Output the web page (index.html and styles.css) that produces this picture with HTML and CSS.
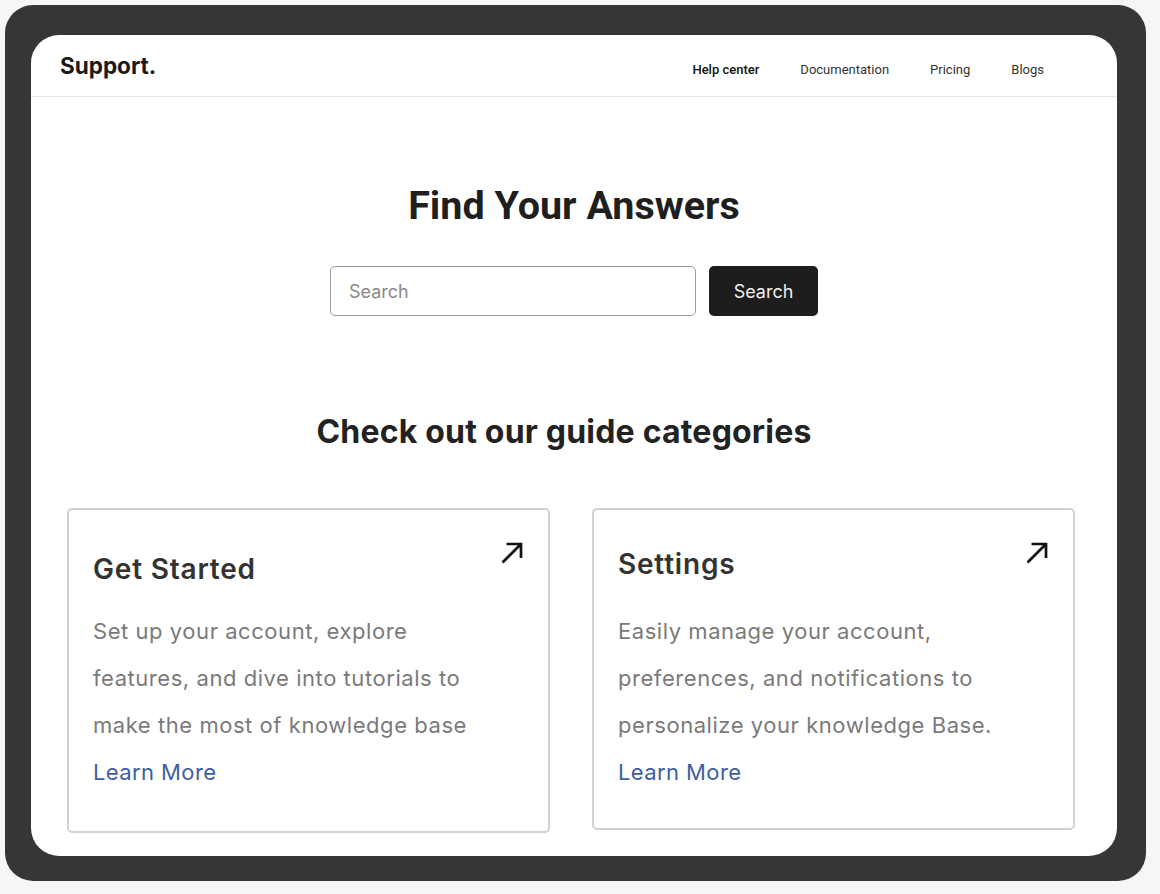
FILE: index.html
```html
<!DOCTYPE html>
<html lang="en">
<head>
<meta charset="utf-8">
<title>Support</title>
<link rel="stylesheet" href="styles.css">
</head>
<body>
<div class="frame">
  <div class="screen">
    <header class="topbar">
      <div class="logo">Support.</div>
      <nav class="nav">
        <a class="nav-link active" href="#">Help center</a>
        <a class="nav-link" href="#">Documentation</a>
        <a class="nav-link" href="#">Pricing</a>
        <a class="nav-link" href="#">Blogs</a>
      </nav>
    </header>
    <main class="content">
      <h1 class="hero-title">Find Your Answers</h1>
      <form class="search">
        <input class="search-input" type="text" placeholder="Search">
        <button class="search-btn" type="button">Search</button>
      </form>
      <h2 class="section-title">Check out our guide categories</h2>
      <div class="cards">
        <article class="card card-first">
          <div class="card-head">
            <h3 class="card-title">Get Started</h3>
            <svg class="arrow" viewBox="0 0 22 22" width="22" height="22" aria-hidden="true"><path d="M1.5 20.5 L20 2 M5.5 2 H20 V16" fill="none" stroke="#111" stroke-width="2.7"/></svg>
          </div>
          <p class="card-text">Set up your account, explore features, and dive into tutorials to make the most of knowledge base</p>
          <a class="card-link" href="#">Learn More</a>
        </article>
        <article class="card card-second">
          <div class="card-head">
            <h3 class="card-title">Settings</h3>
            <svg class="arrow" viewBox="0 0 22 22" width="22" height="22" aria-hidden="true"><path d="M1.5 20.5 L20 2 M5.5 2 H20 V16" fill="none" stroke="#111" stroke-width="2.7"/></svg>
          </div>
          <p class="card-text">Easily manage your account, preferences, and notifications to personalize your knowledge Base.</p>
          <a class="card-link" href="#">Learn More</a>
        </article>
      </div>
    </main>
  </div>
</div>
</body>
</html>
```
FILE: styles.css
```css
* { box-sizing: border-box; }
html, body { margin: 0; }
body {
  background: #f6f6f6;
  padding: 5px 14px 12px 5px;
  font-family: "Inter", "Liberation Sans", sans-serif;
}
.frame {
  background: #363638;
  border-radius: 28px;
  padding: 30px 29px 25px 26px;
}
.screen {
  background: #ffffff;
  border-radius: 28px;
  height: 821px;
  overflow: hidden;
}
.topbar {
  height: 62px;
  border-bottom: 1px solid #e6e6e6;
  display: flex;
  align-items: center;
  justify-content: space-between;
  padding: 0 73px 0 29px;
}
.logo {
  font-family: "Inter", sans-serif;
  font-weight: 700;
  font-size: 22.5px;
  color: #1a1a1a;
  margin-top: 0;
}
.nav {
  display: flex;
  gap: 41px;
  margin-top: 8px;
}
.nav-link {
  font-family: "Roboto", sans-serif;
  font-size: 13px;
  color: #333;
  text-decoration: none;
}
.nav-link.active {
  font-weight: 500;
  color: #111;
}
.content {
  display: flex;
  flex-direction: column;
  align-items: center;
}
.hero-title {
  margin: 85px 0 0;
  font-family: "Roboto", sans-serif;
  font-weight: 700;
  font-size: 39.5px;
  line-height: 48px;
  color: #1f1f1f;
}
.search {
  margin: 36px 0 0;
  display: flex;
  gap: 13px;
}
.search-input {
  width: 366px;
  height: 50px;
  border: 1px solid #9c9c9c;
  border-radius: 5px;
  padding: 0 18px;
  font-family: "Inter", sans-serif;
  font-size: 18px;
  color: #333;
  outline: none;
}
.search-input::placeholder { color: #8a8a8a; }
.search-btn {
  width: 109px;
  height: 50px;
  border: none;
  border-radius: 5px;
  background: #1d1d1d;
  color: #f0f0f0;
  font-family: "Inter", sans-serif;
  font-size: 18px;
}
.section-title {
  margin: 96px 20px 0 0;
  font-family: "Inter", sans-serif;
  font-weight: 700;
  font-size: 32px;
  line-height: 40px;
  letter-spacing: 0.2px;
  color: #222;
}
.cards {
  margin: 56px 0 0 -6px;
  display: flex;
  gap: 42px;
  align-items: flex-start;
}
.card {
  width: 483px;
  border: 2px solid #d2d2d2;
  border-radius: 5px;
  padding: 32px 25px 35px 24px;
}
.card-second { padding-bottom: 32px; }
.card-head {
  display: flex;
  justify-content: space-between;
  align-items: flex-start;
}
.card-title {
  margin: 10px 0 0;
  font-family: "Inter", sans-serif;
  font-weight: 600;
  font-size: 28px;
  line-height: 34px;
  letter-spacing: 0.8px;
  color: #333;
}
.card-second .card-title { margin-top: 5px; }
.arrow { display: block; }
.card-text {
  margin: 22px 0 0;
  max-width: 392px;
  font-size: 22px;
  line-height: 47px;
  letter-spacing: 0.55px;
  color: #7a7a7a;
}
.card-second .card-text { margin-top: 27px; }
.card-link {
  display: block;
  font-size: 22px;
  line-height: 47px;
  letter-spacing: 0.4px;
  color: #3e5ea2;
  text-decoration: none;
}
```
